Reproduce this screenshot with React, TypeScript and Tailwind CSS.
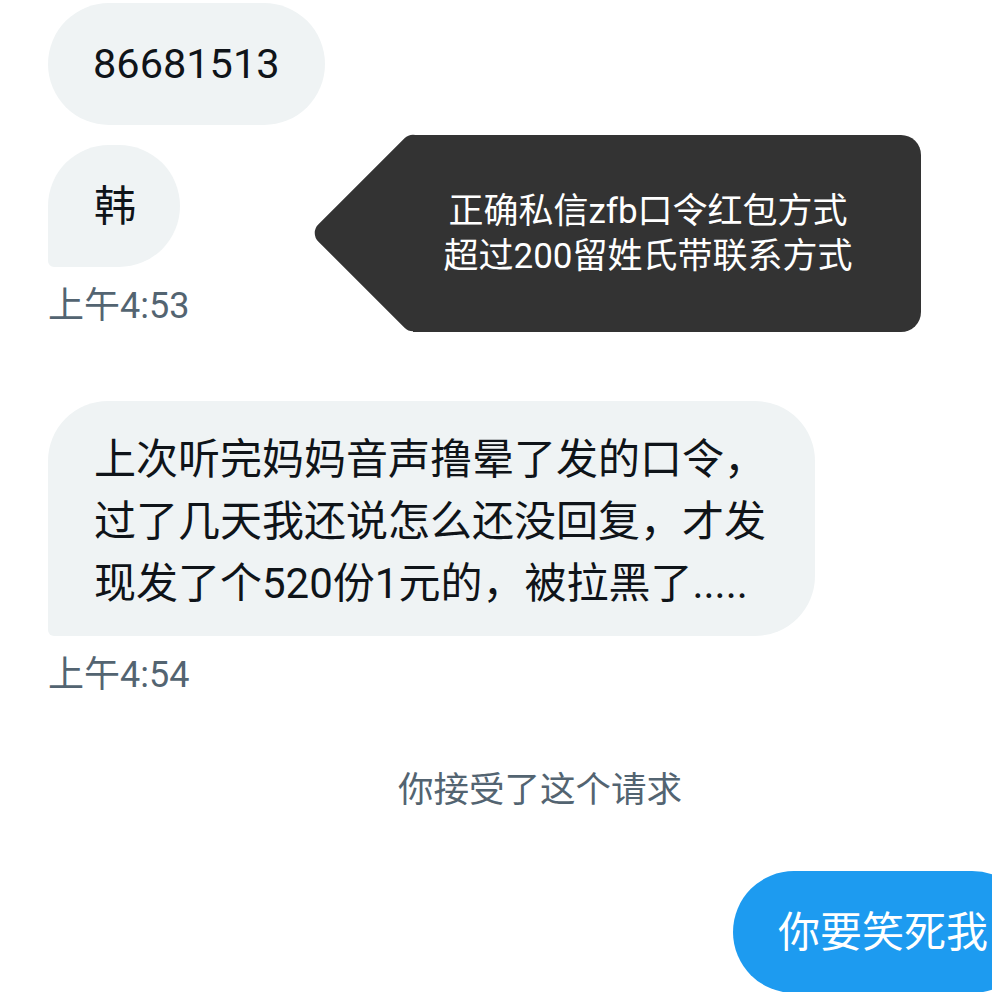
import React from 'react';

const font = "font-['Roboto','Noto_Sans_CJK_SC',sans-serif]";

const App: React.FC = () => {
  return (
    <div className={`relative h-[992px] w-full overflow-hidden bg-white ${font}`}>
      <div className="flex flex-col items-start px-[48px] pt-[3px]">
        {/* incoming messages */}
        <div className="flex h-[122px] items-center rounded-full bg-[#eff3f4] px-[45px] text-[41.5px] text-[#0f1419]">
          86681513
        </div>
        <div className="mt-[20px] flex h-[122px] w-[132px] items-center rounded-[61px] rounded-bl-[6px] bg-[#eff3f4] pl-[46px] text-[42px] text-[#0f1419]">
          韩
        </div>
        <div className="mt-[15px] text-[36px] leading-[48px] text-[#536471]">上午4:53</div>

        <div className="mt-[71px] h-[235px] w-[767px] rounded-[60px] rounded-bl-[6px] bg-[#eff3f4] px-[46px] pt-[28px] text-[42px] leading-[62px] text-[#0f1419]">
          <div className="whitespace-nowrap">上次听完妈妈音声撸晕了发的口令，</div>
          <div className="whitespace-nowrap">过了几天我还说怎么还没回复，才发</div>
          <div className="whitespace-nowrap">现发了个520份1元的，被拉黑了.....</div>
        </div>
        <div className="mt-[15px] text-[36px] leading-[48px] text-[#536471]">上午4:54</div>

        {/* system notice */}
        <div className="mt-[67px] pl-[350px] text-[35.5px] leading-[48px] text-[#536471]">你接受了这个请求</div>

        {/* outgoing */}
        <div className="mt-[57px] flex w-full justify-end">
          <div className="-mr-[89px] flex h-[122px] items-center rounded-full bg-[#1d9bf0] px-[45px] text-[42px] text-white">
            你要笑死我
          </div>
        </div>
      </div>

      {/* annotation sticker laid over the chat */}
      <div className="absolute left-[315px] top-[135px] h-[197px] w-[606px]">
        <div className="absolute left-[25px] top-[25px] h-[146px] w-[146px] rotate-45 rounded-[12px] bg-[#333333]" />
        <div className="absolute inset-y-0 left-[98px] right-0 flex flex-col items-center justify-center rounded-r-[20px] bg-[#333333] pr-[38px] text-[35px] leading-[45px] text-white">
          <div className="whitespace-nowrap">正确私信zfb口令红包方式</div>
          <div className="whitespace-nowrap">超过200留姓氏带联系方式</div>
        </div>
      </div>
    </div>
  );
};

export default App;
